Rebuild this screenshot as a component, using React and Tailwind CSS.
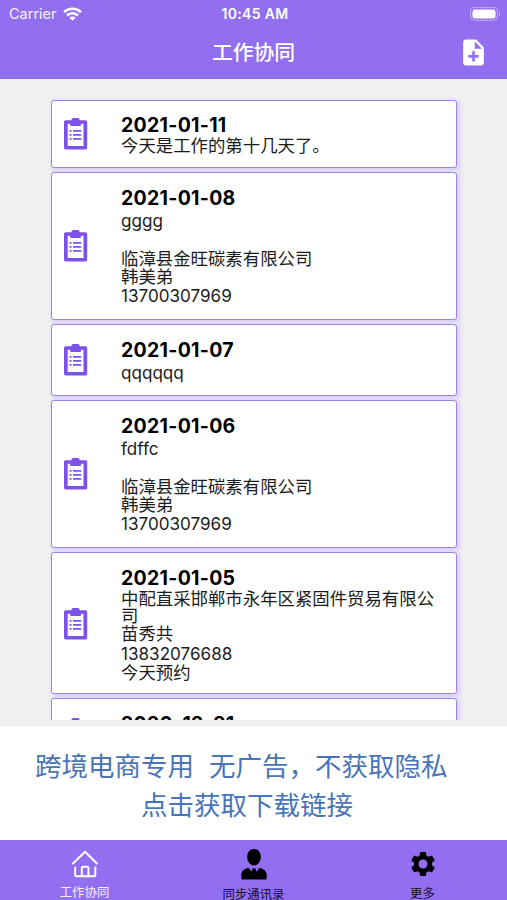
import { MdNoteAdd, MdSettings } from 'react-icons/md'

const ENTRIES = [
    { date: '2021-01-11', size: 'h-[68px]', lines: ['今天是工作的第十几天了。'] },
    { date: '2021-01-08', size: 'h-[148px]', lines: ['gggg', '', '临漳县金旺碳素有限公司', '韩美弟', '13700307969'] },
    { date: '2021-01-07', size: 'h-[72px]', lines: ['qqqqqq'] },
    { date: '2021-01-06', size: 'h-[148px]', lines: ['fdffc', '', '临漳县金旺碳素有限公司', '韩美弟', '13700307969'] },
    { date: '2021-01-05', size: 'h-[142px] pt-px', lines: ['中配直采邯郸市永年区紧固件贸易有限公', '司', '苗秀共', '13832076688', '今天预约'] },
    { date: '2020-12-31', size: 'h-[72px]', lines: ['qqqq'] },
]

function WifiIcon() {
    return (
        <svg width="19" height="14" viewBox="0 0 19 14" fill="none" stroke="#fff" strokeWidth="2.5">
            <path d="M1 5.2a12.3 12.3 0 0 1 17 0" />
            <path d="M4 8.5a8 8 0 0 1 11 0" />
            <path d="M9.5 13.8 6.3 10.800a4.600 4.600 0 0 1 6.400 0z" fill="#fff" stroke="none" />
        </svg>
    )
}

function BatteryIcon() {
    return (
        <svg width="31" height="14" viewBox="0 0 31 14" fill="none">
            <rect x="0.6" y="0.6" width="26.8" height="12.8" rx="4" stroke="#fff" strokeOpacity="0.45" />
            <rect x="2.5" y="2.5" width="23" height="9" rx="2.2" fill="#fff" />
            <path d="M29 4.8c1.5.6 1.5 3.8 0 4.4z" fill="#fff" fillOpacity="0.5" />
        </svg>
    )
}

function ClipboardIcon() {
    return (
        <svg width="24" height="32" viewBox="0 0 24 32" fill="#7c52ea">
            <path fillRule="evenodd" d="M1.6 2.2H7.500V1.500Q7.500 0 9 0h5Q15.500 0 15.500 1.500v.7h6.100Q23.200 2.200 23.200 3.800v26q0 1.600-1.600 1.600H1.600Q0 31.400 0 29.800v-26Q0 2.200 1.600 2.200zM3.700 5.800v22.300h15.800V5.800h-2.300v.6q0 1.600-1.600 1.600h-8q-1.600 0-1.600-1.600v-.6z" />
            <path d="M5.500 12h2v1.700h-2zM9 12h8.200v1.700H9zM5.500 16h2v1.700h-2zM9 16h8.200v1.700H9zM5.500 20h2v1.700h-2zM9 20h8.200v1.700H9z" />
        </svg>
    )
}

function HomeIcon() {
    return (
        <svg width="28" height="28" viewBox="0 0 28 28" fill="none" stroke="#fff" strokeWidth="2" strokeLinecap="round" strokeLinejoin="round">
            <path d="M2 13.500 14 1.800l12 11.700" />
            <path d="M4.200 17.500v7.500q0 1.200 1.200 1.200h17.700q1.200 0 1.200-1.200v-7.500" />
            <path d="M10.800 26v-8q0-1.200 1.200-1.200h4.300q1.200 0 1.200 1.200v8" />
        </svg>
    )
}

function PersonIcon() {
    return (
        <svg width="26" height="31" viewBox="0 0 26 31" fill="#000">
            <path d="M13 0c4.200 0 6.800 3.400 6.800 7.800 0 4.700-3 8.700-6.800 8.700s-6.800-4-6.800-8.700C6.200 3.400 8.800 0 13 0z" />
            <path d="M7.500 18.800 10.300 22.500l1.200-1.700-.7-1.300h4.400l-.7 1.300 1.200 1.700 2.800-3.700c4.200 1.200 7.200 3.200 7.200 7.200v3.500q0 1-1 1H1.300q-1 0-1-1V26c0-4 3-6 7.200-7.200z" />
        </svg>
    )
}

// latin and CJK text sit in rows of different heights
function Line({ text }) {
    if (text === '') return <div className="h-[19px]" />
    if (/^[\x20-\x7e]+$/.test(text)) return <div className="h-[21px] text-[17.1px] leading-[21px]">{text}</div>
    return <div className="h-[17.6px] whitespace-nowrap text-[17.4px] leading-[17.6px]">{text}</div>
}

function EntryCard({ entry }) {
    return (
        <div className={`${entry.size} flex shrink-0 items-center rounded-[3px] border-[1.5px] border-[#9f83e8] bg-white pl-3 shadow-[2px_2px_4px_1px_#d9cbfa]`}>
            <ClipboardIcon />
            <div className="ml-[33px] text-[#1c1c1c]">
                <div className="h-6 text-[19.5px] leading-6 font-bold tracking-[0.28px] text-black">{entry.date}</div>
                {entry.lines.map((line, i) => <Line key={i} text={line} />)}
            </div>
        </div>
    )
}

function Tab({ icon, label, className }) {
    return (
        <div className={`flex flex-1 flex-col items-center ${className}`}>
            <div className="flex h-[31px] items-center">{icon}</div>
            <span className="mt-1.5 text-[12.4px] leading-[18px]">{label}</span>
        </div>
    )
}

export default function App() {
    return (
        <div className="flex h-[900px] w-[507px] flex-col overflow-hidden bg-[#f0f0f0] font-['Inter','Noto_Sans_CJK_SC',sans-serif]">
            <header className="h-[79px] shrink-0 bg-[#926ef0] text-white">
                <div className="grid h-[27px] grid-cols-3 items-center pr-1.5 pl-[9px]">
                    <div className="flex items-center gap-1.5 text-[14.5px] text-white/90">
                        Carrier
                        <WifiIcon />
                    </div>
                    <div className="text-center text-[14px] font-semibold tracking-[0.35px]">10:45 AM</div>
                    <div className="flex justify-end"><BatteryIcon /></div>
                </div>
                <div className="grid h-[51px] grid-cols-3 items-center">
                    <h1 className="col-start-2 pt-px text-center text-[20.8px] font-medium">工作协同</h1>
                    <div className="flex justify-end pr-[18px]"><MdNoteAdd size={31} /></div>
                </div>
            </header>

            <main className="flex h-[641px] shrink-0 flex-col gap-1 overflow-hidden pt-[21px] pr-[50px] pl-[51px]">
                {ENTRIES.map(entry => <EntryCard key={entry.date} entry={entry} />)}
            </main>

            <section className="mt-1.5 h-[114px] shrink-0 bg-white pt-[21px] text-[26.5px] leading-[38.500px] text-[#4874b8]">
                <div className="flex gap-[15px] pl-[35px] whitespace-nowrap">
                    <span>跨境电商专用</span>
                    <span>无广告，不获取隐私</span>
                </div>
                <div className="pl-[141px]">点击获取下载链接</div>
            </section>

            <nav className="flex h-[60px] shrink-0 bg-[#926ef0] pt-[9px]">
                <Tab icon={<HomeIcon />} label="工作协同" className="pt-px text-white/90" />
                <Tab icon={<PersonIcon />} label="同步通讯录" className="text-[#160d2b]" />
                <Tab icon={<MdSettings size={30} color="#000" />} label="更多" className="text-[#160d2b]" />
            </nav>
        </div>
    )
}
